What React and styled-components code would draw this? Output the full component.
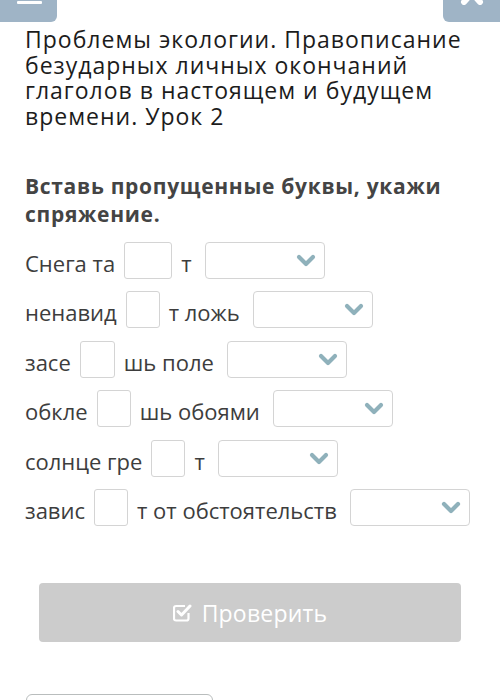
import React from "react";
import styled, { createGlobalStyle } from "styled-components";

const Global = createGlobalStyle`
  html, body { margin: 0; padding: 0; background: #fff; }
  body { font-family: "Open Sans", "Noto Sans", sans-serif; overflow: hidden; }
`;

const Page = styled.div`
  width: 500px;
  height: 700px;
  overflow: hidden;
  display: flex;
  flex-direction: column;
`;

const TopBar = styled.div`
  display: flex;
  justify-content: space-between;
  height: 22px;
`;

const CornerButton = styled.div`
  width: 57px;
  height: 22px;
  background: #9fb4c6;
  border-radius: ${(p) => (p.$side === "left" ? "0 0 6px 0" : "0 0 0 6px")};
  position: relative;
  overflow: hidden;
`;

const Burger = styled.span`
  position: absolute;
  left: 17px;
  top: 1px;
  width: 25px;
  height: 3px;
  background: #fff;
  border-radius: 1px;
`;

const CloseGlyph = styled.svg`
  position: absolute;
  left: 17px;
  top: -17px;
`;

const Content = styled.div`
  padding: 5px 20px 0 25px;
  display: flex;
  flex-direction: column;
`;

const Title = styled.h1`
  margin: 0;
  font-size: 23px;
  line-height: 25.7px;
  letter-spacing: 1px;
  font-weight: 400;
  color: #1c1c1c;
`;

const Task = styled.h2`
  margin: 42px 0 0;
  font-size: 21px;
  line-height: 28px;
  letter-spacing: 0.7px;
  font-weight: 700;
  color: #444;
`;

const Rows = styled.div`
  margin-top: 14px;
  display: flex;
  flex-direction: column;
  gap: 12.5px;
`;

const Row = styled.div`
  display: flex;
  align-items: center;
  height: 37px;
  gap: 9px;
  font-size: 22px;
  letter-spacing: 0;
  color: #3d3d3d;
  white-space: nowrap;
`;

const Word = styled.span`
  line-height: 37px;
  margin-top: 6px;
`;

const LetterBox = styled.div`
  width: ${(p) => p.$w}px;
  height: 37px;
  box-sizing: border-box;
  border: 1px solid #d4d4d4;
  border-radius: 3px;
  background: #fff;
`;

const Select = styled.div`
  margin-left: 4px;
  width: 120px;
  height: 37px;
  box-sizing: border-box;
  border: 1px solid #d4d4d4;
  border-radius: 4px;
  display: flex;
  align-items: center;
  justify-content: flex-end;
  padding-right: 8px;
`;

const Chevron = () => (
  <svg width="20" height="13" viewBox="0 0 20 13">
    <polyline
      points="3,3 10,10 17,3"
      fill="none"
      stroke="#8fb1bb"
      strokeWidth="4.2"
      strokeLinecap="round"
      strokeLinejoin="round"
    />
  </svg>
);

const CheckIcon = () => (
  <svg width="19" height="19" viewBox="0 0 19 19">
    <path
      d="M15.5 10V15.5a2 2 0 0 1-2 2H3a2 2 0 0 1-2-2V5a2 2 0 0 1 2-2H12"
      fill="none"
      stroke="#fff"
      strokeWidth="2.2"
      strokeLinejoin="round"
    />
    <polyline
      points="5,8.5 8.5,12 17,3"
      fill="none"
      stroke="#fff"
      strokeWidth="3"
      strokeLinecap="round"
      strokeLinejoin="round"
    />
  </svg>
);

const CheckButton = styled.button`
  margin: 57px 19px 0 14px;
  height: 59px;
  border: none;
  border-radius: 4px;
  background: #cccccc;
  color: #fff;
  font-family: "Open Sans", "Noto Sans", sans-serif;
  font-size: 23px;
  letter-spacing: 0.2px;
  display: flex;
  align-items: center;
  justify-content: center;
  gap: 10px;
`;

const OutlineButton = styled.div`
  margin-top: 52px;
  width: 187px;
  height: 40px;
  box-sizing: border-box;
  border: 1px solid #b9bdbd;
  border-radius: 6px;
  margin-left: 1px;
`;

const rows = [
  { pre: "Снега та", w: 48, post: "т" },
  { pre: "ненавид", w: 34, post: "т ложь" },
  { pre: "засе", w: 35, post: "шь поле" },
  { pre: "обкле", w: 34, post: "шь обоями" },
  { pre: "солнце гре", w: 34, post: "т" },
  { pre: "завис", w: 34, post: "т от обстоятельств" },
];

export default function App() {
  return (
    <Page>
      <Global />
      <TopBar>
        <CornerButton $side="left">
          <Burger />
        </CornerButton>
        <CornerButton $side="right">
          <CloseGlyph width="24" height="22" viewBox="0 0 24 22">
            <path
              d="M4 1 L20 19 M20 1 L4 19"
              stroke="#fff"
              strokeWidth="6"
              strokeLinecap="round"
            />
          </CloseGlyph>
        </CornerButton>
      </TopBar>
      <Content>
        <Title>
          Проблемы экологии. Правописание безударных личных окончаний глаголов
          в настоящем и будущем времени. Урок 2
        </Title>
        <Task>Вставь пропущенные буквы, укажи спряжение.</Task>
        <Rows>
          {rows.map((r, i) => (
            <Row key={i}>
              <Word>{r.pre}</Word>
              <LetterBox $w={r.w} />
              <Word>{r.post}</Word>
              <Select>
                <Chevron />
              </Select>
            </Row>
          ))}
        </Rows>
        <CheckButton>
          <CheckIcon />
          Проверить
        </CheckButton>
        <OutlineButton />
      </Content>
    </Page>
  );
}
